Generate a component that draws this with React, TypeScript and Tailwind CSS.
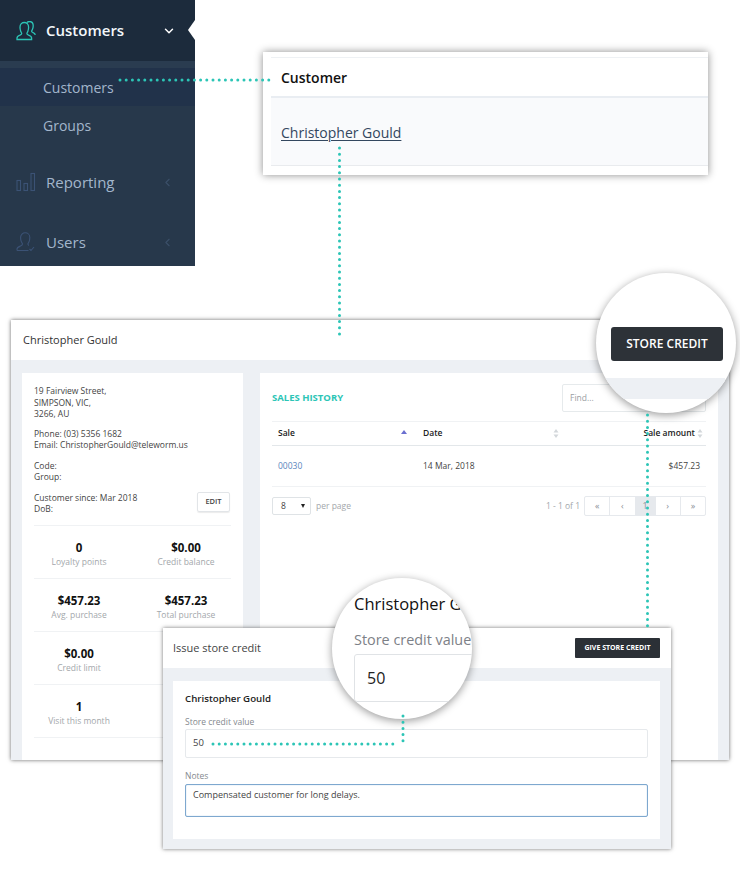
import React from 'react';
import { ChevronDown, ChevronLeft } from 'lucide-react';

const DotLine: React.FC<{ x1: number; y1: number; x2: number; y2: number }> = ({ x1, y1, x2, y2 }) => (
  <line x1={x1} y1={y1} x2={x2} y2={y2} stroke="#2cc5b6" strokeWidth={3} strokeLinecap="round" strokeDasharray="0 6.2" />
);

const NavItem: React.FC<{ icon: React.ReactNode; label: string; h: string }> = ({ icon, label, h }) => (
  <div className={`flex shrink-0 items-center pl-4 pr-[21px] ${h}`}>
    {icon}
    <span className="ml-[10px] flex-1 text-[15px] font-medium text-[#a3b6cc]">{label}</span>
    <ChevronLeft size={13} strokeWidth={2} className="text-[#3b4f68]" />
  </div>
);

const UsersIcon = () => (
  <svg width="20" height="20" viewBox="0 0 20 20" fill="none" stroke="#2cc5b6" strokeWidth="1.3">
    <path d="M1 18.5v-1.6c0-1.6 1.4-2.2 3-2.8 1.2-.5 1.7-.9 1.7-1.7 0-.6-.6-1-1-2.2C4.100 8.800 4 7.800 4 6.300 4 3.300 6 1.500 8.300 1.500s4.300 1.800 4.300 4.800c0 1.500-.1 2.500-.7 3.900-.4 1.200-1 1.600-1 2.200 0 .8.500 1.200 1.700 1.700 1.600.6 3 1.200 3 2.800v1.600z" />
    <path d="M11 1.400c.8-.6 1.500-.9 2.400-.9 2.100 0 3.800 1.700 3.800 4.300 0 1.400-.2 2.400-.7 3.500-.4 1-.9 1.400-.9 2 0 .7.500 1 1.500 1.400 1.100.5 2.100 1 2.100 2.300" />
  </svg>
);

const BarsIcon = () => (
  <svg width="20" height="20" viewBox="0 0 20 20" fill="none" stroke="#3b5275" strokeWidth="1.1">
    <rect x="1" y="8.500" width="3.500" height="10" />
    <rect x="8" y="11.500" width="3.500" height="7" />
    <rect x="15" y="1.500" width="3.500" height="17" />
  </svg>
);

const UserIcon = () => (
  <svg width="20" height="20" viewBox="0 0 20 20" fill="none" stroke="#3b5275" strokeWidth="1.1">
    <path d="M1 18.500v-1.400c0-1.700 1.600-2.300 3.400-3 1.500-.6 2.100-1 2.100-2 0-.7-.7-1.200-1.200-2.600C4.700 8 4.600 6.900 4.600 5.500 4.600 2.600 6.800.800 9.200.800s4.600 1.800 4.600 4.700c0 1.400-.1 2.500-.7 4-.5 1.400-1.200 1.900-1.200 2.600 0 .7.300 1.100 1 1.500" />
    <path d="M1 18.500h11.500M13.500 17l1.500 1.500 3-3.500" />
  </svg>
);

const Stat: React.FC<{ value?: string; label?: string }> = ({ value, label }) => (
  <div className="flex w-[90px] flex-col items-center">
    <span className="h-[15px] text-[11.500px] leading-[15px] font-bold text-[#111]">{value}</span>
    <span className="mt-[1px] h-[12px] text-[8.500px] leading-[12px] text-[#a3a7ab]">{label}</span>
  </div>
);

const StatRow: React.FC<{ left: [string, string]; right: [string, string] }> = ({ left, right }) => (
  <div className="flex h-[53px] items-center justify-between border-t border-[#f0f2f4] pt-[4px]">
    <Stat value={left[0]} label={left[1]} />
    <Stat value={right[0]} label={right[1]} />
  </div>
);

const SortArrows = () => (
  <svg width="6" height="9" viewBox="0 0 6 9" fill="#d3d7db">
    <path d="M3 0l2.500 3.500h-5zM3 9L.5 5.500h5z" />
  </svg>
);

const PageButton: React.FC<{ children?: React.ReactNode; active?: boolean; last?: boolean }> = ({ children, active, last }) => (
  <div className={`flex items-center justify-center text-[#8b9097] ${active ? 'w-[20px] bg-[#e6e9ed]' : 'flex-1'} ${last ? '' : 'border-r border-[#e6e9ed]'}`}>
    {children}
  </div>
);

export default function App() {
  return (
    <div className="relative h-[870px] w-[740px] overflow-hidden bg-white font-['Open_Sans',sans-serif]">
      {/* sidebar */}
      <div className="absolute top-0 left-0 flex h-[266px] w-[195px] flex-col overflow-hidden bg-[#27384b]">
        <div className="relative flex h-[61px] shrink-0 items-center bg-[#1c2b3c] pr-[19px] pl-4">
          <UsersIcon />
          <span className="ml-[10px] flex-1 text-[15px] font-semibold text-[#f2f7fa]">Customers</span>
          <ChevronDown size={14} strokeWidth={2.5} className="text-white" />
          <div className="absolute top-[20px] right-0 h-0 w-0 border-y-[10px] border-r-[7px] border-y-transparent border-r-white" />
        </div>
        <div className="h-[7px] shrink-0 bg-[#2a3c50]" />
        <div className="flex h-[38px] shrink-0 items-center bg-[#21324a] pt-[1px] pl-[43px] text-sm text-[#a3b6cc]">Customers</div>
        <div className="flex h-[40px] shrink-0 items-center pl-[43px] text-sm text-[#a3b6cc]">Groups</div>
        <NavItem icon={<BarsIcon />} label="Reporting" h="mt-[6px] h-[60px]" />
        <NavItem icon={<UserIcon />} label="Users" h="h-[60px]" />
      </div>

      {/* customer search panel */}
      <div className="absolute top-[52px] left-[263px] flex h-[123px] w-[445px] flex-col bg-white pt-[5px] pl-[8px] shadow-[0_0_8px_rgba(0,0,0,0.45)]">
        <div className="flex h-[41px] items-center border-y border-b-2 border-t-[#eef1f4] border-b-[#e9edf2] pt-[2px] pl-[10px] text-sm font-semibold text-[#111]">Customer</div>
        <div className="flex h-[68px] items-center border-b border-[#e9ebee] bg-[#f9fafc] pt-[2px] pl-[10px] text-sm text-[#33475f] underline underline-offset-2">Christopher Gould</div>
      </div>

      {/* customer window */}
      <div className="absolute top-[320px] left-[11px] flex h-[440px] w-[718px] flex-col bg-[#edf0f4] shadow-[0_0_4px_rgba(0,0,0,0.6)]">
        <div className="flex h-[40px] shrink-0 items-center bg-white pl-[12px] text-[11px] font-medium text-[#333]">Christopher Gould</div>
        <div className="flex flex-1 gap-[17px] pt-[13px] pl-[11px]">
          <div className="flex w-[221px] flex-col bg-white px-[12px] pt-[12px] text-[8.500px] leading-[11.500px] text-[#444]">
            <p>19 Fairview Street,<br />SIMPSON, VIC,<br />3266, AU</p>
            <p className="mt-[8px]">Phone: (03) 5356 1682<br />Email: ChristopherGould@teleworm.us</p>
            <p className="mt-[9px]">Code:<br />Group:</p>
            <div className="mt-[9px] flex items-start justify-between pr-[1px] pb-[10px]">
              <p>Customer since: Mar 2018<br />DoB:</p>
              <div className="flex h-[20px] w-[33px] items-center justify-center rounded-[2px] border border-[#e2e5e8] text-[7.500px] font-semibold text-[#444] shadow-[0_1px_1px_rgba(0,0,0,0.08)]">EDIT</div>
            </div>
            <StatRow left={['0', 'Loyalty points']} right={['$0.00', 'Credit balance']} />
            <StatRow left={['$457.23', 'Avg. purchase']} right={['$457.23', 'Total purchase']} />
            <StatRow left={['$0.00', 'Credit limit']} right={['', '']} />
            <StatRow left={['1', 'Visit this month']} right={['', 'Avg. visit']} />
            <div className="border-t border-[#f0f2f4]" />
          </div>
          <div className="flex w-[458px] flex-col bg-white px-[12px] pt-[11px]">
            <div className="flex h-[28px] items-center justify-between">
              <span className="text-[9.500px] font-bold text-[#2cc5b6]">SALES HISTORY</span>
              <div className="flex h-[28px] w-[144px] items-center rounded-[2px] border border-[#e6eaec] pl-[7px] text-[8.500px] text-[#9a9ea3]">Find...</div>
            </div>
            <div className="mt-[9px] flex h-[25px] items-center border-y border-t-[#f0f2f4] border-b-[#e3e7ea] pr-[3px] pl-[6px] text-[8.500px] font-semibold text-[#222]">
              <span className="flex w-[137px] items-center justify-between pr-[8px]">Sale<span className="mb-[3px] h-0 w-0 border-x-[3px] border-b-[4px] border-x-transparent border-b-[#6a6fd0]" /></span>
              <span className="ml-[8px] flex w-[136px] items-center justify-between">Date<SortArrows /></span>
              <span className="flex flex-1 items-center justify-end gap-[2px]">Sale amount<SortArrows /></span>
            </div>
            <div className="flex h-[41px] items-center border-b border-[#f0f2f4] pr-[6px] pl-[6px] text-[8.500px] text-[#444]">
              <span className="w-[145px] text-[#5b86bd]">00030</span>
              <span className="flex-1">14 Mar, 2018</span>
              <span>$457.23</span>
            </div>
            <div className="mt-[9px] flex items-center">
              <div className="flex h-[18px] w-[39px] items-center justify-between rounded-[2px] border border-[#dfe3e6] pr-[5px] pl-[8px] text-[8.500px] text-[#444]">
                8<span className="h-0 w-0 border-x-[2.500px] border-t-[4px] border-x-transparent border-t-[#222]" />
              </div>
              <span className="ml-[5px] flex-1 text-[8.500px] text-[#a3a7ab]">per page</span>
              <span className="mr-[4px] text-[8.500px] text-[#a3a7ab]">1 - 1 of 1</span>
              <div className="flex h-[20px] w-[122px] rounded-[2px] border border-[#e6e9ed] text-[9px]">
                <PageButton>«</PageButton>
                <PageButton>‹</PageButton>
                <PageButton active>1</PageButton>
                <PageButton>›</PageButton>
                <PageButton last>»</PageButton>
              </div>
            </div>
          </div>
        </div>
      </div>

      {/* issue store credit window */}
      <div className="absolute top-[628px] left-[163px] flex h-[221px] w-[508px] flex-col bg-[#edf0f4] shadow-[0_0_4px_rgba(0,0,0,0.55)]">
        <div className="flex h-[40px] shrink-0 items-center justify-between bg-white pr-[11px] pl-[10px]">
          <span className="text-[11px] text-[#444]">Issue store credit</span>
          <div className="flex h-[20px] w-[85px] items-center justify-center rounded-[1px] bg-[#2b3036] text-[7px] font-bold text-white">GIVE STORE CREDIT</div>
        </div>
        <div className="mx-[10px] mt-[13px] flex h-[158px] w-[487px] flex-col bg-white px-[12px] pt-[11px]">
          <span className="text-[9.700px] leading-[14px] font-semibold text-[#222]">Christopher Gould</span>
          <span className="mt-[9px] text-[8.500px] leading-[13px] text-[#85898e]">Store credit value</span>
          <div className="mt-[1px] flex h-[29px] items-center rounded-[2px] border border-[#e6e9ec] pl-[7px] text-[9.500px] text-[#444]">50</div>
          <span className="mt-[11px] text-[8.500px] leading-[13px] text-[#85898e]">Notes</span>
          <div className="mt-[2px] h-[33px] rounded-[2px] border border-[#7ea8cf] pt-[3px] pl-[7px] text-[9px] leading-[13px] text-[#444] shadow-[inset_0_0_1px_#7ea8cf]">Compensated customer for long delays.</div>
        </div>
      </div>

      {/* magnifier over the store credit button */}
      <div className="absolute top-[273px] left-[596px] flex h-[140px] w-[140px] flex-col overflow-hidden rounded-full bg-white shadow-[0_2px_8px_rgba(0,0,0,0.4)]">
        <div className="h-[105px] shrink-0 pt-[54px] pl-[15px]">
          <div className="flex h-[34px] w-[112px] items-center justify-center rounded-[3px] bg-[#2d3238] text-xs font-semibold text-white">STORE CREDIT</div>
        </div>
        <div className="h-[21px] w-[129px] shrink-0 bg-[#edf0f4]" />
      </div>

      {/* magnifier over the credit value */}
      <div className="absolute top-[578px] left-[332px] h-[141px] w-[140px] overflow-hidden rounded-full bg-white pt-[14px] pl-[22px] shadow-[0_2px_8px_rgba(0,0,0,0.4)]">
        <div className="w-[200px] text-[16.500px] leading-[24px] font-medium whitespace-nowrap text-[#111]">Christopher Gould</div>
        <div className="mt-[12px] text-[14.400px] leading-[24px] whitespace-nowrap text-[#7d8187]">Store credit value</div>
        <div className="mt-[2px] flex h-[48px] w-[200px] items-center rounded-[3px] border border-[#e0e3e6] pl-[12px] text-base text-[#222]">50</div>
      </div>

      {/* dotted connectors */}
      <svg className="absolute top-0 left-0" width="740" height="870" fill="none">
        <DotLine x1={120} y1={80} x2={269} y2={80} />
        <DotLine x1={339.500} y1={148} x2={339.500} y2={335} />
        <DotLine x1={647.500} y1={415} x2={647.500} y2={629} />
        <DotLine x1={213} y1={744} x2={398} y2={744} />
        <DotLine x1={403} y1={716} x2={403} y2={742} />
      </svg>
    </div>
  );
}
